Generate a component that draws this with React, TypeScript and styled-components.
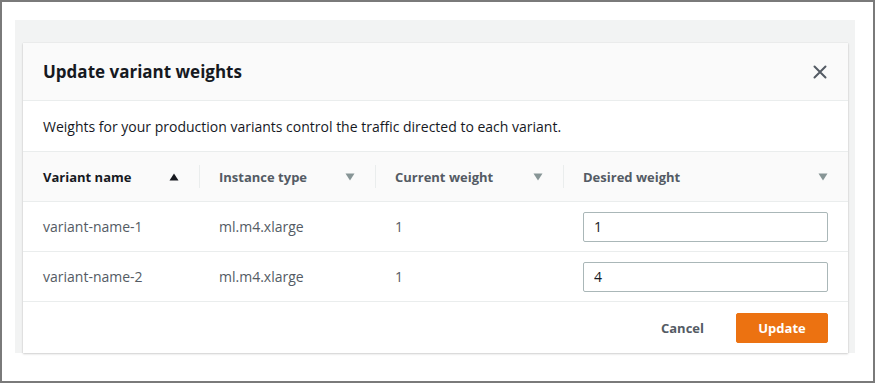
import React from "react";
import styled, { createGlobalStyle } from "styled-components";

const Global = createGlobalStyle`
  html, body { margin: 0; padding: 0; background: #fff; }
  body { font-family: "Open Sans", "Noto Sans", Arial, sans-serif; }
  * { box-sizing: border-box; }
`;

const Frame = styled.div`
  width: 875px;
  height: 383px;
  border: 2px solid #7a7a7a;
  background: #fff;
  padding: 18px 18px 0 13px;
`;

const Backdrop = styled.div`
  width: 840px;
  height: 333px;
  background: #f2f3f3;
  padding: 23px 7px 0 8px;
`;

const Modal = styled.div`
  width: 825px;
  height: 310px;
  background: #fff;
  box-shadow: 0 1px 2px rgba(0, 0, 0, 0.18), 0 0 1px rgba(0, 0, 0, 0.12);
  display: flex;
  flex-direction: column;
`;

const Header = styled.div`
  height: 58px;
  background: #fafafa;
  border-bottom: 1px solid #eaeded;
  display: flex;
  align-items: center;
  justify-content: space-between;
  padding: 0 20px 0 20px;
`;

const Title = styled.h2`
  margin: 0;
  font-size: 17px;
  font-weight: 700;
  color: #16191f;
`;

const Close = styled.button`
  border: none;
  background: none;
  padding: 0;
  width: 20px;
  height: 20px;
  display: flex;
  align-items: center;
  justify-content: center;
  margin-right: -2px;
`;

const Intro = styled.div`
  height: 51px;
  display: flex;
  align-items: center;
  padding: 0 20px;
  font-size: 14px;
  color: #16191f;
  border-bottom: 1px solid #eaeded;
`;

const Grid = styled.div`
  display: grid;
  grid-template-columns: 176px 176px 188px 285px;
`;

const HeadCell = styled.div<{ $sep?: boolean }>`
  height: 50px;
  background: #fafafa;
  border-bottom: 1px solid #eaeded;
  display: flex;
  align-items: center;
  justify-content: space-between;
  padding: 0 20px;
  font-size: 13px;
  font-weight: 700;
  position: relative;
  ${(p) =>
    p.$sep
      ? `&::before { content: ""; position: absolute; left: 0; top: 13px; bottom: 13px; width: 1px; background: #eaeded; }`
      : ""}
`;

const HeadLabel = styled.span<{ $muted?: boolean }>`
  color: ${(p) => (p.$muted ? "#545b64" : "#16191f")};
`;

const Cell = styled.div`
  height: 50px;
  border-bottom: 1px solid #eaeded;
  display: flex;
  align-items: center;
  padding: 0 20px;
  font-size: 14px;
  color: #545b64;
`;

const Input = styled.input`
  width: 245px;
  height: 30px;
  border: 1px solid #aab7b8;
  border-radius: 2px;
  padding: 0 10px;
  font-family: inherit;
  font-size: 14px;
  color: #16191f;
  background: #fff;
  outline: none;
`;

const Footer = styled.div`
  flex: 1;
  display: flex;
  align-items: center;
  justify-content: flex-end;
  padding: 0 20px;
  gap: 20px;
`;

const LinkButton = styled.button`
  border: none;
  background: none;
  font-family: inherit;
  font-size: 13px;
  font-weight: 700;
  color: #545b64;
  padding: 0 12px;
`;

const PrimaryButton = styled.button`
  border: 1px solid #ec7211;
  background: #ec7211;
  color: #fff;
  font-family: inherit;
  font-size: 13px;
  font-weight: 700;
  border-radius: 2px;
  width: 92px;
  height: 30px;
`;

const SortIcon = ({ up, active }: { up?: boolean; active?: boolean }) => (
  <svg width="10" height="8" viewBox="0 0 10 8">
    {up ? (
      <path d="M5 0.5 L9.5 7.5 L0.5 7.5 Z" fill={active ? "#16191f" : "#879596"} />
    ) : (
      <path d="M0.5 0.5 L9.5 0.5 L5 7.5 Z" fill={active ? "#16191f" : "#879596"} />
    )}
  </svg>
);

const rows = [
  { name: "variant-name-1", type: "ml.m4.xlarge", current: "1", desired: "1" },
  { name: "variant-name-2", type: "ml.m4.xlarge", current: "1", desired: "4" },
];

export default function App() {
  return (
    <>
      <Global />
      <Frame>
        <Backdrop>
          <Modal>
            <Header>
              <Title>Update variant weights</Title>
              <Close aria-label="Close">
                <svg width="14" height="14" viewBox="0 0 14 14">
                  <path d="M1.5 1.5 L12.5 12.5 M12.5 1.5 L1.5 12.5" stroke="#545b64" strokeWidth="2" strokeLinecap="round" />
                </svg>
              </Close>
            </Header>
            <Intro>Weights for your production variants control the traffic directed to each variant.</Intro>
            <Grid>
              <HeadCell>
                <HeadLabel>Variant name</HeadLabel>
                <SortIcon up active />
              </HeadCell>
              <HeadCell $sep>
                <HeadLabel $muted>Instance type</HeadLabel>
                <SortIcon />
              </HeadCell>
              <HeadCell $sep>
                <HeadLabel $muted>Current weight</HeadLabel>
                <SortIcon />
              </HeadCell>
              <HeadCell $sep>
                <HeadLabel $muted>Desired weight</HeadLabel>
                <SortIcon />
              </HeadCell>
              {rows.map((r) => (
                <React.Fragment key={r.name}>
                  <Cell>{r.name}</Cell>
                  <Cell>{r.type}</Cell>
                  <Cell>{r.current}</Cell>
                  <Cell>
                    <Input defaultValue={r.desired} />
                  </Cell>
                </React.Fragment>
              ))}
            </Grid>
            <Footer>
              <LinkButton>Cancel</LinkButton>
              <PrimaryButton>Update</PrimaryButton>
            </Footer>
          </Modal>
        </Backdrop>
      </Frame>
    </>
  );
}
